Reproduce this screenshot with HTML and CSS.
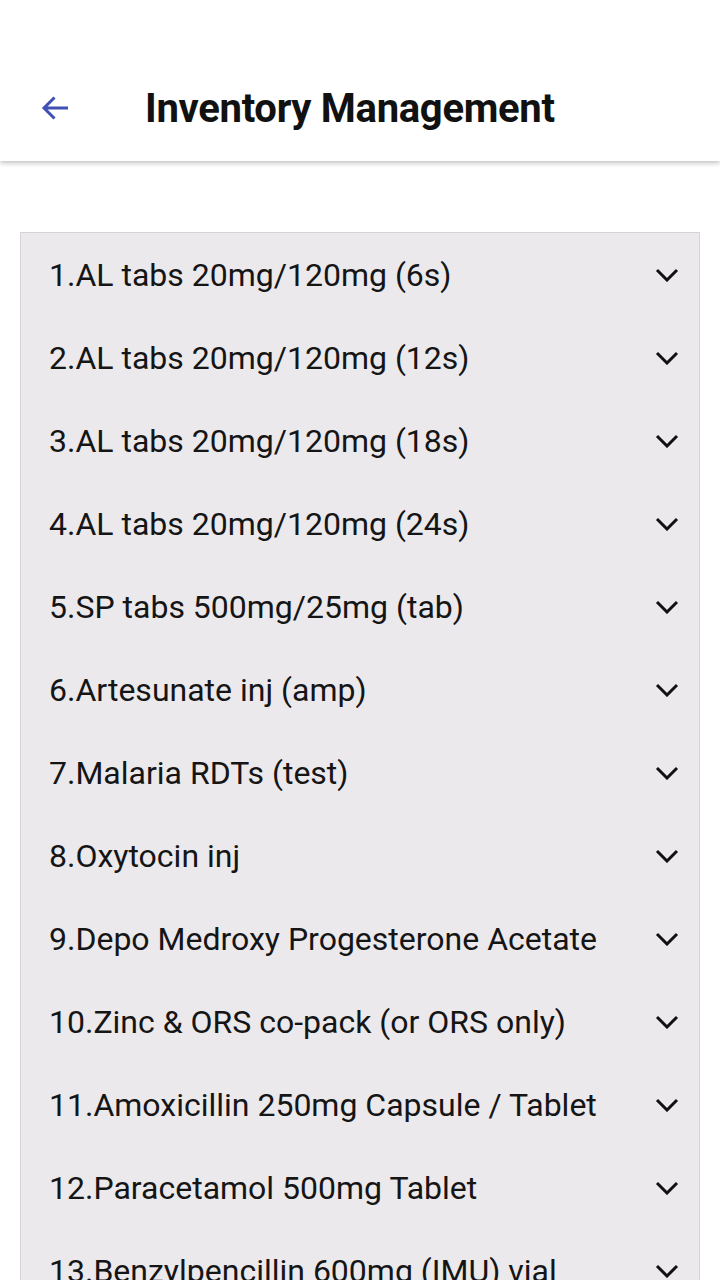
FILE: index.html
```html
<!DOCTYPE html>
<html>
<head>
<meta charset="utf-8">
<link rel="stylesheet" href="styles.css">
</head>
<body>
<header class="appbar">
  <button class="back" aria-label="Back">
    <svg width="36" height="36" viewBox="0 0 24 24"><path d="M20 12H4.5M11 5l-7 7 7 7" fill="none" stroke="#3f51b5" stroke-width="2"/></svg>
  </button>
  <h1 class="title">Inventory Management</h1>
</header>
<main class="content">
  <ul class="list">
    <li class="row"><span>1.AL tabs 20mg/120mg (6s)</span><svg class="chev" viewBox="0 0 24 14"><path d="M2 2l10 10 10-10"/></svg></li>
    <li class="row"><span>2.AL tabs 20mg/120mg (12s)</span><svg class="chev" viewBox="0 0 24 14"><path d="M2 2l10 10 10-10"/></svg></li>
    <li class="row"><span>3.AL tabs 20mg/120mg (18s)</span><svg class="chev" viewBox="0 0 24 14"><path d="M2 2l10 10 10-10"/></svg></li>
    <li class="row"><span>4.AL tabs 20mg/120mg (24s)</span><svg class="chev" viewBox="0 0 24 14"><path d="M2 2l10 10 10-10"/></svg></li>
    <li class="row"><span>5.SP tabs 500mg/25mg (tab)</span><svg class="chev" viewBox="0 0 24 14"><path d="M2 2l10 10 10-10"/></svg></li>
    <li class="row"><span>6.Artesunate inj (amp)</span><svg class="chev" viewBox="0 0 24 14"><path d="M2 2l10 10 10-10"/></svg></li>
    <li class="row"><span>7.Malaria RDTs (test)</span><svg class="chev" viewBox="0 0 24 14"><path d="M2 2l10 10 10-10"/></svg></li>
    <li class="row"><span>8.Oxytocin inj</span><svg class="chev" viewBox="0 0 24 14"><path d="M2 2l10 10 10-10"/></svg></li>
    <li class="row"><span>9.Depo Medroxy Progesterone Acetate</span><svg class="chev" viewBox="0 0 24 14"><path d="M2 2l10 10 10-10"/></svg></li>
    <li class="row"><span>10.Zinc &amp; ORS co-pack (or ORS only)</span><svg class="chev" viewBox="0 0 24 14"><path d="M2 2l10 10 10-10"/></svg></li>
    <li class="row"><span>11.Amoxicillin 250mg Capsule / Tablet</span><svg class="chev" viewBox="0 0 24 14"><path d="M2 2l10 10 10-10"/></svg></li>
    <li class="row"><span>12.Paracetamol 500mg Tablet</span><svg class="chev" viewBox="0 0 24 14"><path d="M2 2l10 10 10-10"/></svg></li>
    <li class="row"><span>13.Benzylpencillin 600mg (IMU) vial</span><svg class="chev" viewBox="0 0 24 14"><path d="M2 2l10 10 10-10"/></svg></li>
  </ul>
</main>
</body>
</html>
```
FILE: styles.css
```css
html, body {
  margin: 0;
  padding: 0;
  height: 1280px;
  overflow: hidden;
  background: #ffffff;
  font-family: Roboto, "Noto Sans", sans-serif;
}
.appbar {
  height: 161px;
  background: #fff;
  display: flex;
  align-items: center;
  box-shadow: 0 2px 5px rgba(0,0,0,0.25);
  position: relative;
  z-index: 1;
  box-sizing: border-box;
  padding-top: 55px;
}
.back {
  border: 0;
  background: none;
  padding: 0;
  margin-left: 38px;
  width: 36px;
  height: 36px;
  display: flex;
}
.title {
  margin: 0 0 0 71px;
  font-size: 40px;
  font-weight: 700;
  color: #111;
  letter-spacing: -0.3px;
}
.content {
  padding: 71px 20px 0 20px;
}
.list {
  list-style: none;
  margin: 0;
  padding: 0;
  background: #ebe9ec;
  border: 1px solid #d4d3d5;
}
.row {
  height: 83px;
  display: flex;
  align-items: center;
  justify-content: space-between;
  padding: 0 20px 0 28px;
  font-size: 32px;
  color: #151515;
}
.chev {
  width: 24px;
  height: 14px;
  fill: none;
  stroke: #111;
  stroke-width: 3;
}
```
